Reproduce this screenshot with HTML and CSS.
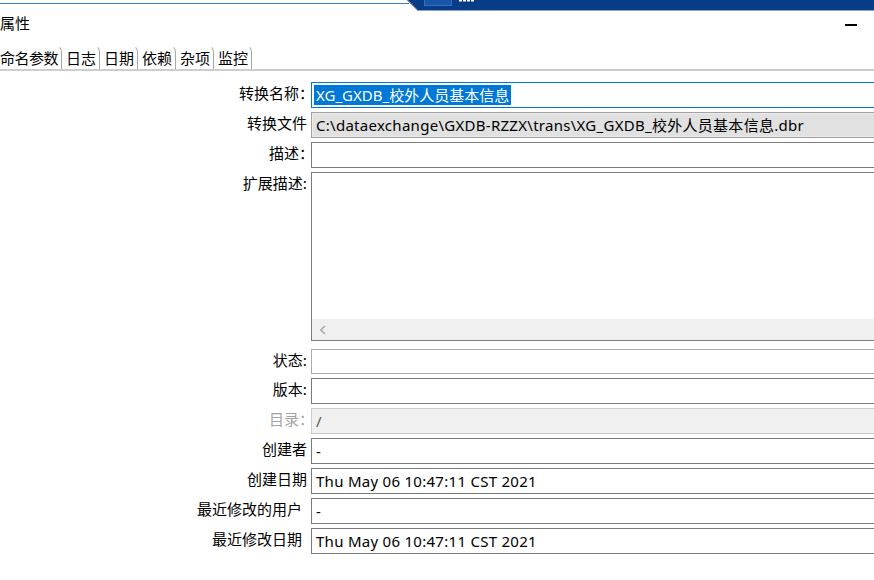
FILE: index.html
```html
<!DOCTYPE html>
<html lang="zh-CN">
<head>
<meta charset="utf-8">
<title>属性</title>
<link rel="stylesheet" href="styles.css">
</head>
<body>
<div class="window">
  <svg class="chrome" width="874" height="12" viewBox="0 0 874 12" aria-hidden="true">
    <line x1="0" y1="3.5" x2="409" y2="3.5" stroke="#3b7cc4" stroke-width="1"/>
    <polygon points="407,0 874,0 874,11 418,11" fill="#073d87"/>
    <line x1="407.5" y1="0" x2="418.5" y2="11" stroke="#6f8cb8" stroke-width="1"/>
    <line x1="418" y1="10.5" x2="874" y2="10.5" stroke="#8aa3c8" stroke-width="1"/>
    <rect x="424.5" y="-1" width="27" height="6.5" fill="#1a56a8" stroke="#3270c2" stroke-width="1"/>
    <line x1="459" y1="0.75" x2="475" y2="0.75" stroke="#ffffff" stroke-width="1.5" stroke-dasharray="3 1"/>
  </svg>

  <header class="titlebar">
    <span class="title">属性</span>
    <span class="minimize" aria-label="minimize"></span>
  </header>

  <nav class="tabs">
    <span class="tab first">命名参数</span>
    <span class="tab">日志</span>
    <span class="tab">日期</span>
    <span class="tab">依赖</span>
    <span class="tab">杂项</span>
    <span class="tab">监控</span>
  </nav>

  <div class="props">
    <span class="lbl fw">转换名称：</span>
    <div class="field focus"><span class="sel">XG_GXDB_校外人员基本信息</span></div>

    <span class="lbl">转换文件</span>
    <div class="field readonly">C:\dataexchange\GXDB-RZZX\trans\XG_GXDB_校外人员基本信息.dbr</div>

    <span class="lbl fw">描述：</span>
    <div class="field"></div>

    <span class="lbl">扩展描述:</span>
    <div class="field area">
      <div class="area-body"></div>
      <div class="hscroll">
        <svg width="8" height="10" viewBox="0 0 8 10" aria-hidden="true"><polyline points="6,1 1.8,5 6,9" fill="none" stroke="#a9a9a9" stroke-width="1.6"/></svg>
      </div>
    </div>

    <span class="lbl">状态:</span>
    <div class="field light"></div>

    <span class="lbl">版本:</span>
    <div class="field"></div>

    <span class="lbl fw disabled">目录：</span>
    <div class="field off">/</div>

    <span class="lbl">创建者</span>
    <div class="field">-</div>

    <span class="lbl">创建日期</span>
    <div class="field">Thu May 06 10:47:11 CST 2021</div>

    <span class="lbl trail">最近修改的用户</span>
    <div class="field">-</div>

    <span class="lbl trail">最近修改日期</span>
    <div class="field">Thu May 06 10:47:11 CST 2021</div>
  </div>
</div>
</body>
</html>
```

FILE: styles.css
```css
html, body {
  margin: 0;
  padding: 0;
  background: #ffffff;
  overflow: hidden;
}

body {
  width: 874px;
  height: 580px;
  font-family: "Noto Sans CJK SC", "Noto Sans", sans-serif;
  font-size: 15px;
  color: #000000;
}

.window {
  width: 874px;
  height: 580px;
  overflow: hidden;
}

.chrome {
  display: block;
}

.titlebar {
  display: flex;
  justify-content: space-between;
  align-items: center;
  height: 22px;
  line-height: 22px;
}

.minimize {
  width: 12px;
  height: 1.5px;
  background: #000000;
  margin-right: 17px;
  margin-top: 4px;
}

.tabs {
  display: flex;
  margin-top: 11px;
  margin-left: -4px;
  border-bottom: 2px solid #cdcdcd;
}

.tab {
  padding: 1px 3px 0 4px;
  line-height: 22px;
  border-top: 1px solid transparent;
  border-right: 1px solid #a6a6a6;
  border-top-right-radius: 7px;
}

.tab.first {
  letter-spacing: -0.5px;
}

.props {
  display: grid;
  grid-template-columns: 307px 620px;
  grid-template-rows: repeat(3, 26px) 173px 25px repeat(6, 26px);
  column-gap: 4px;
  row-gap: 4px;
  margin-top: 11px;
}

.lbl {
  text-align: right;
  line-height: 21px;
  white-space: nowrap;
}

.lbl.fw {
  margin-right: -7px;
}

.lbl.disabled {
  color: #a3a3a3;
}

.lbl.trail {
  padding-right: 5px;
}

.field {
  box-sizing: border-box;
  height: 100%;
  border: 1px solid #7a7a7a;
  background: #ffffff;
  padding-left: 4px;
  font-family: "Noto Sans", "Noto Sans CJK SC", sans-serif;
  font-size: 15px;
  letter-spacing: 0.28px;
  line-height: 24px;
  white-space: nowrap;
  overflow: hidden;
}

.field.focus {
  border-color: #0078d7;
  padding-left: 2px;
  letter-spacing: 0;
}

.sel {
  display: inline-block;
  background: #0078d7;
  color: #ffffff;
  padding: 0 2px;
  line-height: 20px;
  vertical-align: top;
  margin-top: 2px;
}

.field.readonly {
  border-color: #a2a2a2;
  background: #e1e1e1;
  box-shadow: inset 0 0 0 1px #ececec;
}

.field.light {
  border-color: #ababab;
}

.field.off {
  border-color: #cccccc;
  background: #f0f0f0;
  color: #555555;
}

.field.area {
  height: 169px;
  padding: 0;
  display: flex;
  flex-direction: column;
}

.area-body {
  flex: 1;
}

.hscroll {
  height: 21px;
  background: #f0f0f0;
  display: flex;
  align-items: center;
  padding-left: 7px;
}

.hscroll svg {
  display: block;
}
```
